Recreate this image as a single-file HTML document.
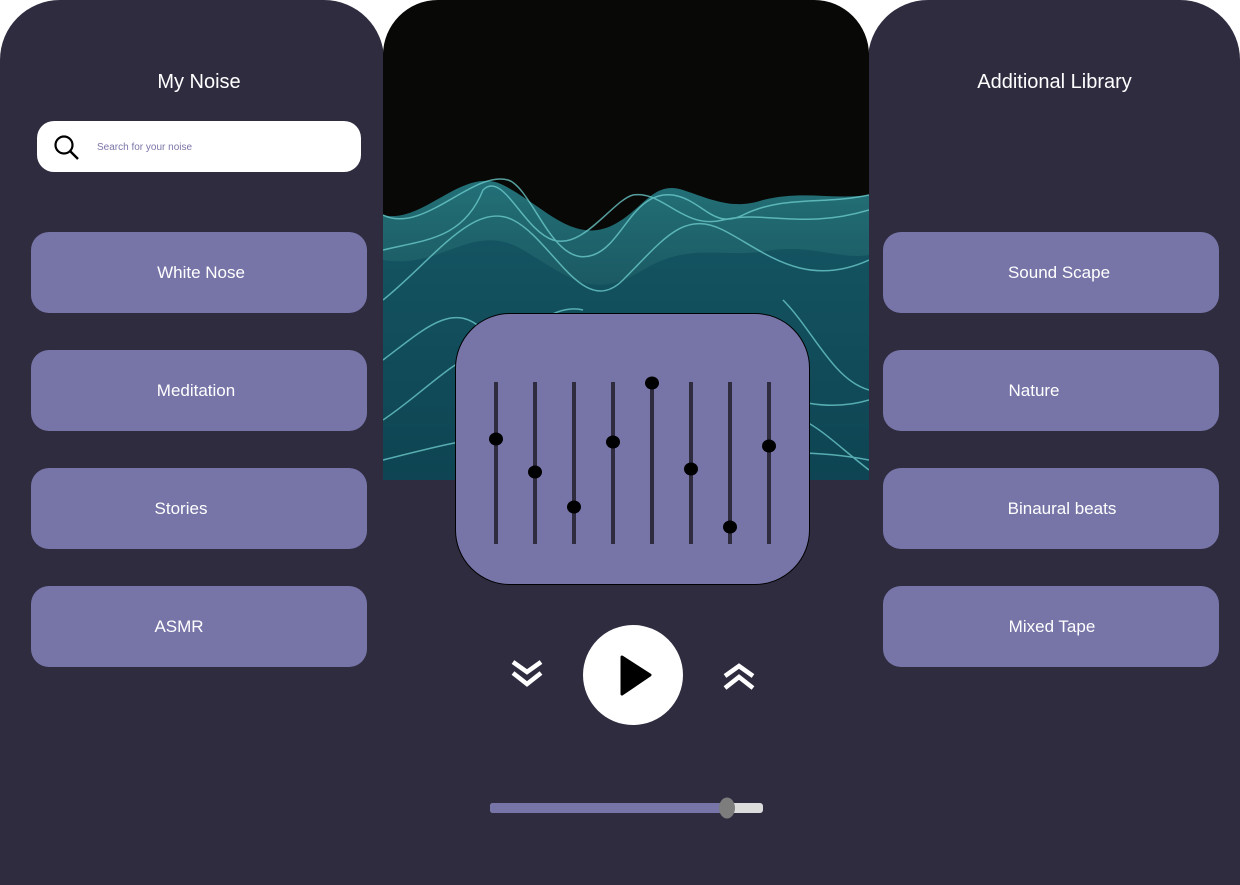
<!DOCTYPE html>
<html><head><style>
*{margin:0;padding:0;box-sizing:border-box}
body{width:1240px;height:885px;background:#fff;position:relative;overflow:hidden;font-family:"Liberation Sans",sans-serif}
.panel{position:absolute;top:0;height:885px;background:#2f2c40}
.btn{position:absolute;height:81px;background:#7775a8;border-radius:18px;color:#fff;font-size:17px;display:flex;align-items:center;justify-content:center}
.title{position:absolute;color:#fff;font-size:20px;text-align:center}
</style></head><body>
<div class="panel" style="left:0;width:384px;border-radius:60px 60px 0 0"></div>
<div class="panel" style="left:868px;width:372px;border-radius:60px 60px 0 0"></div>
<div class="panel" style="left:383px;width:486px;top:400px;height:485px"></div>
<div style="position:absolute;left:383px;top:0;width:486px;height:480px;border-radius:55px 55px 0 0;overflow:hidden;background:#080806">
<svg width="486" height="480" viewBox="0 0 486 480">
<defs><linearGradient id="g" x1="0" y1="0" x2="0" y2="1"><stop offset="0" stop-color="#2a8a94"/><stop offset="1" stop-color="#0d3a4a"/></linearGradient></defs>
<path d="M0 215 C40 225 80 165 120 185 C160 205 190 245 230 225 C260 210 270 180 300 190 C330 200 350 210 380 200 C420 190 450 200 486 195 L486 480 L0 480Z" fill="url(#g)" opacity="0.8"/>
<path d="M0 260 C60 270 90 220 140 250 C190 280 210 300 260 270 C310 240 340 260 390 250 C430 245 460 260 486 255 L486 480 L0 480Z" fill="#0f4d5c" opacity="0.7"/>
<g fill="none" stroke="#6fd0d0" stroke-width="1.5" opacity="0.75">
<path d="M0 215 C40 235 90 170 125 180 C150 188 170 270 210 255 C240 245 250 190 290 195 C320 200 330 230 360 215 C400 195 440 205 486 195"/>
<path d="M0 250 C40 240 80 240 100 190 C120 170 140 230 170 240 C200 250 230 200 250 195 C280 190 300 230 340 220 C380 210 420 230 486 210"/>
<path d="M0 300 C50 260 90 200 130 220 C170 240 200 320 240 280 C280 240 300 210 340 230 C380 250 420 290 486 260"/>
<path d="M0 360 C40 330 70 300 100 330 C130 360 160 300 200 310"/>
<path d="M0 420 C60 380 100 320 160 360 C220 400 260 330 300 350 C360 380 420 420 486 400"/>
<path d="M0 460 C80 440 150 420 220 450 C300 470 380 440 486 460"/>
<path d="M400 300 C430 330 450 380 486 390"/>
<path d="M420 420 C440 430 460 450 486 470"/>
</g></svg></div>
<div class="title" style="left:0;width:398px;top:71px">My Noise</div>
<div class="title" style="left:869px;width:371px;top:71px">Additional Library</div>
<div style="position:absolute;left:37px;top:121px;width:324px;height:51px;background:#fff;border-radius:17px">
<svg style="position:absolute;left:16px;top:13px" width="28" height="28" viewBox="0 0 28 28"><circle cx="11" cy="11" r="8.5" fill="none" stroke="#000" stroke-width="2.2"/><line x1="17" y1="17" x2="25" y2="25" stroke="#000" stroke-width="2.4"/></svg>
<span style="position:absolute;left:60px;top:21px;font-size:10px;color:#7a76a8">Search for your noise</span></div>
<div class="btn" style="left:31px;top:232px;width:336px;padding-left:4px">White Nose</div>
<div class="btn" style="left:31px;top:350px;width:336px;padding-right:6px">Meditation</div>
<div class="btn" style="left:31px;top:468px;width:336px;padding-right:36px">Stories</div>
<div class="btn" style="left:31px;top:586px;width:336px;padding-right:40px">ASMR</div>
<div class="btn" style="left:883px;top:232px;width:336px;padding-left:16px">Sound Scape</div>
<div class="btn" style="left:883px;top:350px;width:336px;padding-right:34px">Nature</div>
<div class="btn" style="left:883px;top:468px;width:336px;padding-left:22px">Binaural beats</div>
<div class="btn" style="left:883px;top:586px;width:336px;padding-left:2px">Mixed Tape</div>
<div style="position:absolute;left:455px;top:313px;width:355px;height:272px;background:#7775a8;border:1px solid #000;border-radius:55px"></div>
<svg style="position:absolute;left:0;top:0" width="1240" height="885">
<g stroke="#2f2c40" stroke-width="4">
<line x1="496" y1="382" x2="496" y2="544"/><line x1="535" y1="382" x2="535" y2="544"/><line x1="574" y1="382" x2="574" y2="544"/><line x1="613" y1="382" x2="613" y2="544"/><line x1="652" y1="382" x2="652" y2="544"/><line x1="691" y1="382" x2="691" y2="544"/><line x1="730" y1="382" x2="730" y2="544"/><line x1="769" y1="382" x2="769" y2="544"/></g>
<g fill="#000"><ellipse cx="496" cy="439" rx="7" ry="6.5"/><ellipse cx="535" cy="472" rx="7" ry="6.5"/><ellipse cx="574" cy="507" rx="7" ry="6.5"/><ellipse cx="613" cy="442" rx="7" ry="6.5"/><ellipse cx="652" cy="383" rx="7" ry="6.5"/><ellipse cx="691" cy="469" rx="7" ry="6.5"/><ellipse cx="730" cy="527" rx="7" ry="6.5"/><ellipse cx="769" cy="446" rx="7" ry="6.5"/></g>
<circle cx="633" cy="675" r="50" fill="#fff"/>
<path d="M622 657 L650 675 L622 694Z" fill="#000" stroke="#000" stroke-width="3" stroke-linejoin="round"/>
<g fill="none" stroke="#fff" stroke-width="4.5" stroke-linejoin="miter">
<path d="M513 662 L527 672 L541 662"/><path d="M513 673 L527 684 L541 673"/>
<path d="M725 676 L739 666 L753 676"/><path d="M725 688 L739 677 L753 688"/>
</g>
<rect x="490" y="803" width="273" height="10" rx="3" fill="#dcdcdc"/>
<rect x="490" y="803" width="240" height="10" rx="3" fill="#7775a8"/>
<ellipse cx="727" cy="808" rx="8" ry="10.5" fill="#7d7d7d"/>
</svg>
</body></html>
